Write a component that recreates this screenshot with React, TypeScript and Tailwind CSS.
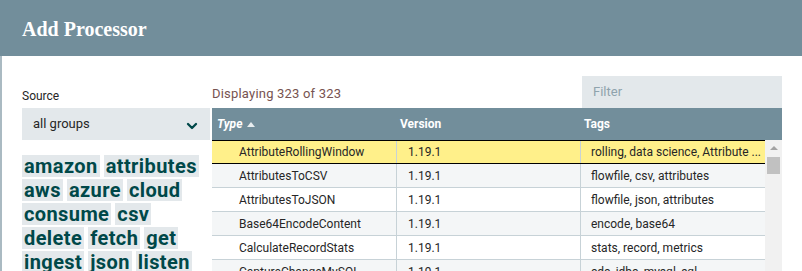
import { ChevronDown } from "lucide-react";

const tags = [
  "amazon",
  "attributes",
  "aws",
  "azure",
  "cloud",
  "consume",
  "csv",
  "delete",
  "fetch",
  "get",
  "ingest",
  "json",
  "listen",
  "logs",
  "put",
];

const rows = [
  { type: "AttributeRollingWindow", version: "1.19.1", tags: "rolling, data science, Attribute ..." },
  { type: "AttributesToCSV", version: "1.19.1", tags: "flowfile, csv, attributes" },
  { type: "AttributesToJSON", version: "1.19.1", tags: "flowfile, json, attributes" },
  { type: "Base64EncodeContent", version: "1.19.1", tags: "encode, base64" },
  { type: "CalculateRecordStats", version: "1.19.1", tags: "stats, record, metrics" },
  { type: "CaptureChangeMySQL", version: "1.19.1", tags: "cdc, jdbc, mysql, sql" },
];

const App = () => {
  return (
    <div
      className="w-[802px] h-[271px] overflow-hidden bg-white text-[#262626]"
      style={{ fontFamily: "Roboto, 'Liberation Sans', sans-serif" }}
    >
      {/* title bar */}
      <div className="h-[56px] bg-[#728e9b] flex items-center pl-[22px]">
        <h1
          className="text-white text-[20px] font-bold pt-[1px]"
          style={{ fontFamily: "'Liberation Serif', serif" }}
        >
          Add Processor
        </h1>
      </div>

      <div className="flex border-l-2 border-[#aabac2] h-[215px] pl-[20px]">
        {/* source + tag cloud */}
        <div className="w-[188px] shrink-0 pt-[32px]">
          <div className="text-[12px] leading-[16px] text-[#262626]">Source</div>
          <div className="mt-[4px] h-[32px] bg-[#e3e8eb] flex items-center justify-between pl-[11px] pr-[10px]">
            <span className="text-[13px]">all groups</span>
            <ChevronDown size={16} strokeWidth={3.5} className="text-[#004849] mt-[3px]" />
          </div>
          <div className="mt-[15px] flex flex-wrap gap-x-[4px] gap-y-[2px]">
            {tags.map((t) => (
              <span
                key={t}
                className="bg-[#e3e8eb] text-[#004849] font-bold text-[20px] leading-[22px] tracking-[0.4px] px-[2px]"
              >
                {t}
              </span>
            ))}
          </div>
        </div>

        {/* processor table */}
        <div className="w-[570px] ml-[2px] pt-[20px]">
          <div className="flex justify-between items-end h-[32px]">
            <span className="text-[13px] text-[#775351] pb-[5px] tracking-[0.2px]">
              Displaying 323 of 323
            </span>
            <div className="w-[200px] h-[32px] bg-[#e3e8eb] flex items-center pl-[11px] text-[13px] text-[#8fa3ad]">
              Filter
            </div>
          </div>

          <div className="h-[32px] bg-[#728e9b] text-white text-[12px] font-bold grid grid-cols-[184px_184px_1fr] items-center">
            <span className="pl-[5px] italic flex items-center gap-[5px]">
              Type
              <svg width="8" height="5" viewBox="0 0 8 5">
                <path d="M0 5 L4 0 L8 5 Z" fill="#e8edef" />
              </svg>
            </span>
            <span className="pl-[4px]">Version</span>
            <span className="pl-[4px]">Tags</span>
          </div>

          <div className="flex">
            <div className="w-[553px]">
              {rows.map((r, i) => (
                <div
                  key={r.type}
                  className={
                    i === 0
                      ? "h-[24px] grid grid-cols-[184px_184px_1fr] text-[12px] bg-[#fff08a] border-y border-black"
                      : i % 2 === 1
                      ? "h-[24px] grid grid-cols-[184px_184px_1fr] text-[12px] bg-[#f4f6f7] border-b border-[#c7d2d7]"
                      : "h-[24px] grid grid-cols-[184px_184px_1fr] text-[12px] bg-white border-b border-[#c7d2d7]"
                  }
                >
                  <div className="pl-[27px] flex items-center truncate">{r.type}</div>
                  <div className="pl-[11px] flex items-center border-l border-[#c7d2d7]">{r.version}</div>
                  <div className="pl-[10px] flex items-center border-l border-[#c7d2d7] whitespace-nowrap overflow-hidden">
                    {r.tags}
                  </div>
                </div>
              ))}
            </div>
            {/* scrollbar */}
            <div className="w-[17px] bg-[#f1f1f1] flex flex-col items-center pt-[6px]">
              <svg width="8" height="4" viewBox="0 0 8 4">
                <path d="M0 4 L4 0 L8 4 Z" fill="#a3a3a3" />
              </svg>
              <div className="mt-[7px] w-[13px] h-[17px] bg-[#c1c1c1]" />
            </div>
          </div>
        </div>
      </div>
    </div>
  );
};

export default App;
